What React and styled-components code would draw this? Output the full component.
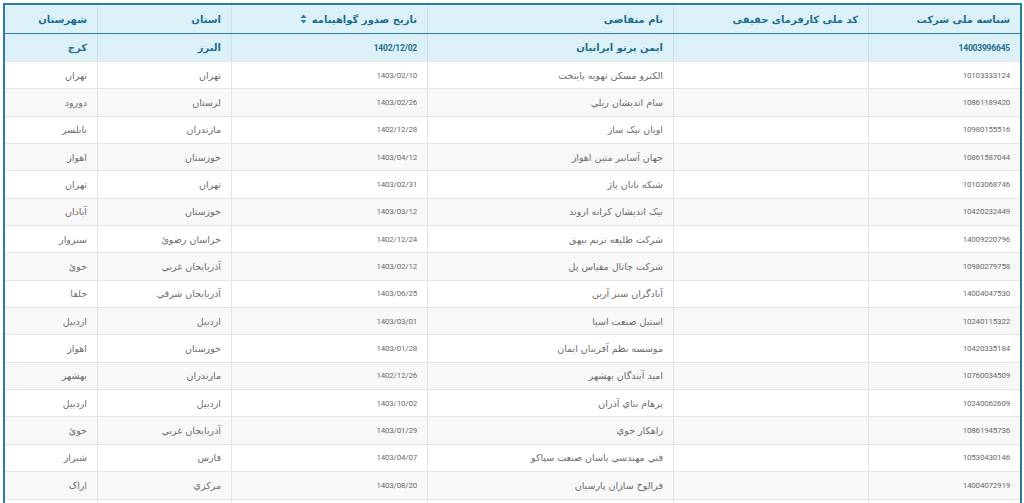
import React from "react";
import styled, { createGlobalStyle } from "styled-components";

const GlobalStyle = createGlobalStyle`
  html, body {
    margin: 0;
    padding: 0;
    background: #ffffff;
    overflow: hidden;
  }
  body {
    font-family: "DejaVu Sans", sans-serif;
  }
`;

const columns = "152px 195px 246px 196px 134px 1fr";

const TableWrap = styled.div`
  direction: rtl;
  margin: 3px 2px 0 3px;
  border: 2px solid #2b7d99;
  border-bottom: none;
  font-family: "DejaVu Sans", sans-serif;
`;

const Row = styled.div`
  display: grid;
  grid-template-columns: ${columns};
  height: ${({ $height }) => $height};
  box-sizing: border-box;
  border-bottom: 1px solid ${({ $head }) => ($head ? "#2b7d99" : "#e4e4e4")};
  background: ${({ $head, $active, $striped }) =>
    $head || $active ? "#dcf0f7" : $striped ? "#f8f8f8" : "#ffffff"};
`;

const Cell = styled.div`
  display: flex;
  align-items: center;
  justify-content: flex-start;
  padding: 0 10px;
  border-left: 1px solid ${({ $head }) => ($head ? "#c9e3ee" : "#e4e4e4")};
  font-size: ${({ $strong }) => ($strong ? "10px" : "9.5px")};
  font-weight: ${({ $strong }) => ($strong ? "bold" : "normal")};
  color: ${({ $strong }) => ($strong ? "#1f6f8c" : "#6b6b6b")};
  white-space: nowrap;
  overflow: hidden;
  gap: 5px;

  &:last-child {
    border-left: none;
  }
`;

const Num = styled.span`
  direction: ltr;
  font-family: "Roboto", "DejaVu Sans", sans-serif;
  font-size: ${({ $strong }) => ($strong ? "8.5px" : "8px")};
  letter-spacing: -0.2px;
`;

const SortIcon = () => (
  <svg width="7" height="10" viewBox="0 0 7 10">
    <path d="M3.5 0.5 L6.5 4 L0.5 4 Z" fill="#2b7d99" />
    <path d="M3.5 9.5 L6.5 6 L0.5 6 Z" fill="#2b7d99" />
  </svg>
);

const headers = [
  "شناسه ملی شرکت",
  "کد ملی کارفرمای حقیقی",
  "نام متقاضی",
  "تاریخ صدور گواهینامه",
  "استان",
  "شهرستان",
];

const active = ["14003996645", "", "ایمن پرتو ایرانیان", "1402/12/02", "البرز", "کرج"];

const rows = [
  ["10103333124", "", "الکترو مسکن تهویه پایتخت", "1403/02/10", "تهران", "تهران"],
  ["10861189420", "", "سام اندیشان ریلي", "1403/02/26", "لرستان", "دورود"],
  ["10980155516", "", "اویان نیک ساز", "1402/12/28", "مازندران", "بابلسر"],
  ["10861587044", "", "جهان آسانبر متین اهواز", "1403/04/12", "خوزستان", "اهواز"],
  ["10103068746", "", "شبکه بانان پاژ", "1403/02/31", "تهران", "تهران"],
  ["10420232449", "", "نیک اندیشان کرانه اروند", "1403/03/12", "خوزستان", "آبادان"],
  ["14009220796", "", "شرکت طلیعه ترنم بیهق", "1402/12/24", "خراسان رضوئ", "سبزوار"],
  ["10980279758", "", "شرکت چاتال مقیاس پل", "1403/02/12", "آذربایجان غربي", "خوئ"],
  ["14004047530", "", "آبادگران سبز آرین", "1403/06/25", "آذربایجان شرقي", "جلفا"],
  ["10240115322", "", "استیل صنعت اسیا", "1403/03/01", "اردبیل", "اردبیل"],
  ["10420335184", "", "موسسه نظم آفرینان ایمان", "1403/01/28", "خوزستان", "اهواز"],
  ["10760034509", "", "امید آیندگان بهشهر", "1402/12/26", "مازندران", "بهشهر"],
  ["10240062609", "", "پرهام بناي آذران", "1403/10/02", "اردبیل", "اردبیل"],
  ["10861945736", "", "راهکار خوي", "1403/01/29", "آذربایجان غربي", "خوئ"],
  ["10530430146", "", "فني مهندسي یاسان صنعت سپاکو", "1403/04/07", "فارس", "شیراز"],
  ["14004072919", "", "فرالوح سازان پارسیان", "1403/08/20", "مرکزي", "اراک"],
  ["", "", "", "", "", ""],
];

const isNum = (v) => /^[0-9/]+$/.test(v);

const renderValue = (v, strong) =>
  isNum(v) ? <Num $strong={strong}>{v}</Num> : v;

export default function App() {
  return (
    <>
      <GlobalStyle />
      <TableWrap>
        <Row $head $height="29px">
          {headers.map((h, i) => (
            <Cell key={h} $head $strong>
              {h}
              {i === 3 && <SortIcon />}
            </Cell>
          ))}
        </Row>
        <Row $active $height="28px">
          {active.map((v, i) => (
            <Cell key={i} $head $strong>
              {renderValue(v, true)}
            </Cell>
          ))}
        </Row>
        {rows.map((r, ri) => (
          <Row key={ri} $striped={ri % 2 === 1} $height="27.35px">
            {r.map((v, i) => (
              <Cell key={i}>{renderValue(v, false)}</Cell>
            ))}
          </Row>
        ))}
      </TableWrap>
    </>
  );
}
